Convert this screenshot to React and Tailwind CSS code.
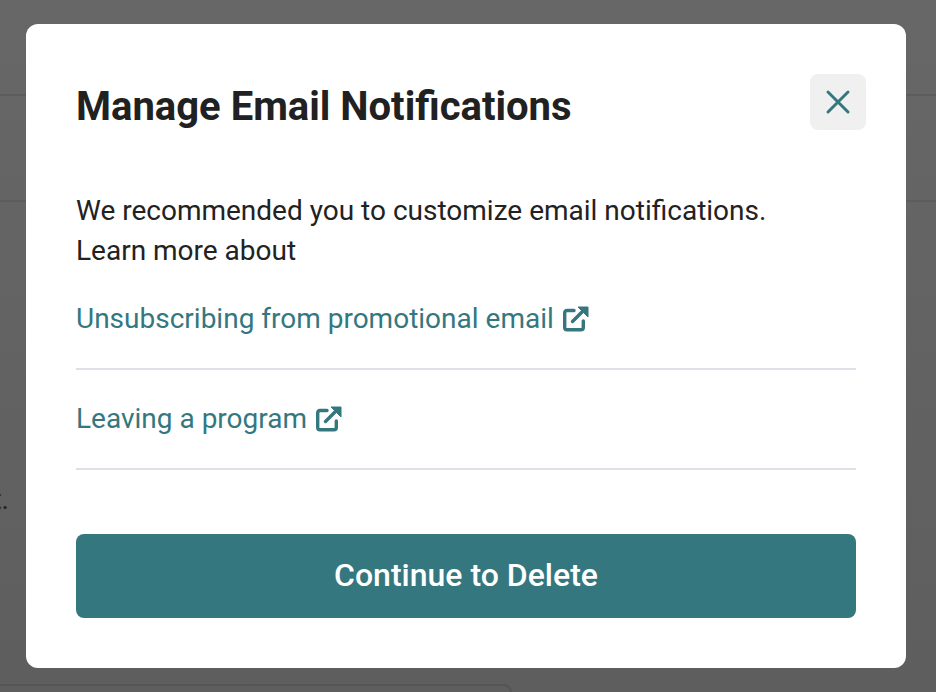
import React from "react";

function ExternalIcon() {
  return (
    <svg width="26" height="26" viewBox="0 0 26 26" fill="none" className="shrink-0">
      <path d="M11 4.500H4C2.500 4.500 1.700 5.500 1.700 7v14.500C1.700 23 2.500 23.800 4 23.800h14c1.500 0 2.300-.8 2.300-2.300V15" stroke="#35777F" strokeWidth="3.400" strokeLinecap="round" />
      <path d="M9.500 15.500L21 4" stroke="#35777F" strokeWidth="3.400" strokeLinecap="round" />
      <path d="M15 1h10v10z" fill="#35777F" stroke="#35777F" strokeWidth="1" strokeLinejoin="round" />
    </svg>
  );
}

export default function App() {
  return (
    <div className="relative h-[692px] w-[936px] overflow-hidden bg-gradient-to-b from-[#676767] to-[#5e5e5e] font-['Roboto',sans-serif]">
      <div className="h-[96px] border-b-2 border-[#5c5c5c]" />
      <div className="h-[106px] border-b-2 border-[#5c5c5c]" />
      <div className="absolute -left-[20px] top-[684px] h-[40px] w-[532px] rounded-lg border-2 border-[#555555]" />
      <div className="absolute -left-[91px] top-[480px] w-[100px] text-right text-[28px] leading-[40px] text-[#222222]">t.</div>
      <div className="absolute left-[26px] top-[24px] flex h-[644px] w-[880px] flex-col rounded-xl bg-white px-[50px] pt-[50px] text-[#222222]">
        <div className="flex items-start justify-between">
          <h1 className="pt-[9px] text-[40px] font-bold leading-[48px] text-[#212121]">Manage Email Notifications</h1>
          <button className="-mr-[10px] flex h-[56px] w-[56px] items-center justify-center rounded-lg bg-[#f0f0f0]">
            <svg width="26" height="26" viewBox="0 0 26 26" fill="none">
              <path d="M3 3L23 23M23 3L3 23" stroke="#35777F" strokeWidth="3" strokeLinecap="round" />
            </svg>
          </button>
        </div>
        <p className="mt-[60px] text-[28px] leading-[40px]">
          We recommended you to customize email notifications.
          <br />
          Learn more about
        </p>
        <a className="flex h-[99px] items-center gap-[10px] border-b-2 border-[#e0e0ea] pb-[2px] text-[28px] text-[#35777F]">
          <span>Unsubscribing from promotional email</span>
          <span className="-ml-[1px]"><ExternalIcon /></span>
        </a>
        <a className="flex h-[100px] items-center gap-[10px] border-b-2 border-[#e0e0ea] text-[28px] text-[#35777F]">
          <span>Leaving a program</span>
          <span className="-ml-[1px]"><ExternalIcon /></span>
        </a>
        <button className="mt-[64px] flex h-[84px] items-center justify-center rounded-lg bg-[#35777F] pb-[2px] text-[32px] font-medium text-white">
          Continue to Delete
        </button>
      </div>
    </div>
  );
}
